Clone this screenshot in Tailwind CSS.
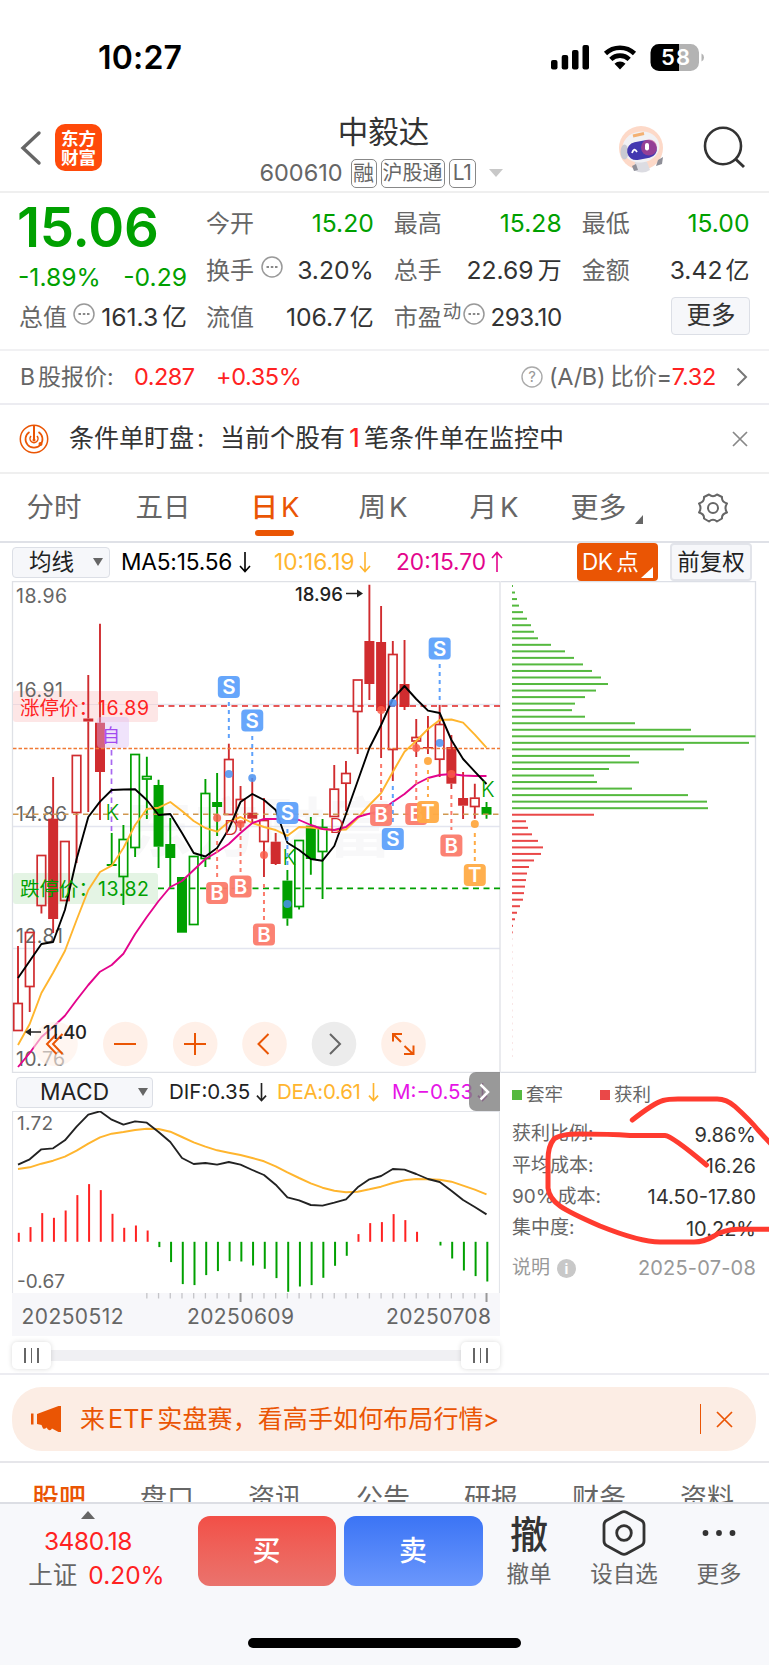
<!DOCTYPE html>
<html lang="zh-CN">
<head>
  <meta charset="UTF-8" />
  <title>中毅达 600610</title>
  <meta name="viewport" content="width=device-width, initial-scale=1.0" />
  <script src="https://cdn.jsdelivr.net/npm/@tailwindcss/browser@4"></script>
</head>
<body class="bg-white text-[#333] font-['Inter','Noto_Sans_CJK_SC',sans-serif] w-[769px] h-[1665px] overflow-hidden relative whitespace-nowrap flex flex-col">

  <!-- status bar -->
  <div class="h-[104px] shrink-0 flex items-start justify-between pl-[98px] pr-[64px] pt-[38px] text-black">
    <div class="text-[32px] leading-[40px] font-semibold tracking-[0.2px]">10:27</div>
    <svg class="mt-[2px]" width="156" height="36" viewBox="549 40 156 36">
      <rect x="551" y="60" width="6.5" height="9.5" rx="2" />
      <rect x="561.7" y="55" width="6.5" height="14.5" rx="2" />
      <rect x="572" y="50" width="6.5" height="19.5" rx="2" />
      <rect x="582.5" y="45" width="6.5" height="24.5" rx="2" />
      <g fill="none" stroke="#000" stroke-width="4.6">
        <path d="M605.5 53.500a21 21 0 0 1 29 0" />
        <path d="M610.800 59.300a13.300 13.300 0 0 1 18.400 0" />
      </g>
      <path d="M614.500 63.800a8 8 0 0 1 11 0L620 69.500z" />
      <path d="M659 44h20v27h-20a8.500 8.500 0 0 1-8.500-8.500v-10A8.500 8.500 0 0 1 659 44z" />
      <path d="M679 44h11.500a8.500 8.500 0 0 1 8.500 8.500v10a8.500 8.500 0 0 1-8.500 8.500H679z" fill="#b3b3b3" />
      <path d="M701.500 53.500q2.500 1 2.500 4t-2.500 4z" fill="#b3b3b3" />
      <text x="675.500" y="65.300" text-anchor="middle" font-size="22" font-weight="600" fill="#fff" textLength="29">58</text>
    </svg>
  </div>

  <!-- title bar -->
  <div class="h-[89px] shrink-0 border-b-2 border-[#efefef] flex justify-between pl-[20px] pr-[22px]">
    <div class="flex items-start w-[240px]">
      <svg class="mt-[26px]" width="22" height="36" viewBox="0 0 22 36"><path d="M19 3L3 18L19 33" fill="none" stroke="#666" stroke-width="3.400" stroke-linecap="round" /></svg>
      <div class="ml-[13px] mt-[20px] size-[47px] rounded-[10px] bg-[#ff4a0a] text-white text-[17.500px] leading-[19px] font-bold flex flex-col items-center justify-center"><span>东方</span><span>财富</span></div>
    </div>
    <div class="flex flex-col items-center">
      <div class="text-[30.500px] leading-[36px] mt-[10px] text-[#333]">中毅达</div>
      <div class="flex items-center h-[30px] mt-[8px] text-[#666] pr-[5px]">
        <span class="text-[23.500px] tracking-[0px] mr-[8px]">600610</span>
        <span class="border-[1.5px] border-[#888] rounded-[5px] h-[29px] w-[26px] text-[21px] leading-[26px] text-center mr-[4px] flex justify-center">融</span>
        <span class="border-[1.5px] border-[#888] rounded-[5px] h-[29px] w-[64px] text-[20px] leading-[26px] mr-[4px] flex justify-center">沪股通</span>
        <span class="border-[1.5px] border-[#888] rounded-[5px] h-[29px] w-[27px] text-[21px] leading-[26px] tracking-[-0.5px] flex justify-center">L1</span>
        <svg class="ml-[13px]" width="14" height="8"><path d="M0 0h14L7 8z" fill="#c8c8c8" /></svg>
      </div>
    </div>
    <div class="flex items-start justify-end w-[240px] pt-[20px]">
      <svg width="50" height="50" viewBox="617 124 50 50">
        <circle cx="642" cy="148" r="22" fill="#fdd9c8" />
        <path d="M636 162q6-3 12 0l3 8q-8 5-16 0z" fill="#dcdce2" />
        <path d="M633 166l4-2 2 6-4 1zM659 160l5-3-1 7-6 2z" fill="#8f8f98" />
        <ellipse cx="642" cy="147" rx="18.500" ry="15.500" fill="#f1f1f4" transform="rotate(-8 642 147)" />
        <ellipse cx="625.500" cy="152" rx="4" ry="7.500" fill="#c9cad2" />
        <rect x="628" y="141" width="30" height="18" rx="9" fill="#4338b0" transform="rotate(-10 643 150)" />
        <rect x="642" y="139.500" width="16" height="16" rx="8" fill="#c04488" opacity=".65" />
        <path d="M633 153q2-6 5-1" fill="none" stroke="#fff" stroke-width="1.800" />
        <rect x="646" y="143" width="4" height="7.500" rx="2" fill="#fff" />
        <path d="M634 136l11-2.500" stroke="#f3b072" stroke-width="3" />
      </svg>
      <svg class="ml-[36px] mr-[1px]" width="44" height="46" viewBox="704 124 44 46">
        <ellipse cx="725" cy="146" rx="18" ry="18.200" fill="none" stroke="#333" stroke-width="2.600" />
        <path d="M737.500 159l8.500 8" stroke="#333" stroke-width="3" />
      </svg>
    </div>
  </div>

  <!-- quote -->
  <div class="h-[158px] shrink-0 border-b-2 border-[#f1f1f3] flex gap-[19px] pl-[19px] pr-[19.500px] text-[24.700px] text-[#333]">
    <div class="w-[168px] shrink-0">
      <div class="h-[61px] pt-[4px] text-[54.500px] leading-[61px] font-semibold text-[#00a000] tracking-[-0.200px] -ml-[2px]">15.06</div>
      <div class="h-[40px] flex items-center justify-between text-[#00a000] mt-[4px] -ml-[1px]"><span>-1.89%</span><span>-0.29</span></div>
      <div class="h-[38px] flex items-center justify-between mt-[1px]">
        <span class="flex items-center text-[#666] text-[24px]">总值<svg class="ml-[6px] -mt-[8px]" width="22" height="22" viewBox="0 0 22 22"><circle cx="11" cy="11" r="10" fill="none" stroke="#999" stroke-width="1.500" /><path d="M5.500 11h2.500M9.800 11h2.500M14 11h2.500" stroke="#888" stroke-width="2.200" /></svg></span>
        <span>161.3<span class="ml-[4px]">亿</span></span>
      </div>
    </div>
    <div class="flex-1 grid grid-cols-3 gap-x-[20px] auto-rows-[47px] pt-[7px]">
      <div class="flex items-center justify-between"><span class="text-[#666] text-[24px]">今开</span><span class="text-[#00a000]">15.20</span></div>
      <div class="flex items-center justify-between"><span class="text-[#666] text-[24px]">最高</span><span class="text-[#00a000]">15.28</span></div>
      <div class="flex items-center justify-between"><span class="text-[#666] text-[24px]">最低</span><span class="text-[#00a000]">15.00</span></div>
      <div class="flex items-center justify-between"><span class="text-[#666] text-[24px] flex items-center">换手<svg class="ml-[7px] -mt-[8px]" width="22" height="22" viewBox="0 0 22 22"><circle cx="11" cy="11" r="10" fill="none" stroke="#999" stroke-width="1.500" /><path d="M5.500 11h2.500M9.800 11h2.500M14 11h2.500" stroke="#888" stroke-width="2.200" /></svg></span><span>3.20%</span></div>
      <div class="flex items-center justify-between"><span class="text-[#666] text-[24px]">总手</span><span>22.69<span class="ml-[4px] text-[24px]">万</span></span></div>
      <div class="flex items-center justify-between"><span class="text-[#666] text-[24px]">金额</span><span>3.42<span class="ml-[3px] text-[24px]">亿</span></span></div>
      <div class="flex items-center justify-between"><span class="text-[#666] text-[24px]">流值</span><span>106.7<span class="ml-[3px] text-[24px]">亿</span></span></div>
      <div class="flex items-center justify-between"><span class="text-[#666] text-[24px] flex items-center">市盈<span class="text-[18.500px] -mt-[12px] ml-[1px]">动</span><svg class="ml-[2px] -mt-[8px]" width="22" height="22" viewBox="0 0 22 22"><circle cx="11" cy="11" r="10" fill="none" stroke="#999" stroke-width="1.500" /><path d="M5.500 11h2.500M9.800 11h2.500M14 11h2.500" stroke="#888" stroke-width="2.200" /></svg></span><span class="tracking-[-0.500px] text-[24.200px] pt-[2px]">293.10</span></div>
      <div class="flex items-center justify-end"><span class="w-[79px] h-[38px] -mr-[1px] -mt-[4px] flex items-center justify-center rounded-[4px] border border-[#dcdfe6] bg-[#f6f7fa] text-[24.500px]">更多</span></div>
    </div>
  </div>

  <!-- B share price -->
  <div class="h-[54px] shrink-0 border-b-2 border-[#ececf1] flex items-center pl-[20px] pr-[21px] text-[23.500px] text-[#666]">
    <span class="w-[114px] text-[23px]"><span class="mr-[3px]">B</span>股报价:</span>
    <span class="w-[82px] tracking-[-0.500px] text-[#f22]">0.287</span>
    <span class="text-[#f22] tracking-[-0.400px]">+0.35%</span>
    <svg class="ml-auto mr-[6px]" width="22" height="22" viewBox="0 0 22 22"><circle cx="11" cy="11" r="10" fill="none" stroke="#aaa" stroke-width="1.400" /><text x="11" y="16.200" text-anchor="middle" font-size="15" fill="#999">?</text></svg>
    <span class="tracking-[-0.300px]">(A/B)<span class="ml-[5px]">比价=</span><span class="text-[#f22]">7.32</span></span>
    <svg class="ml-[20px]" width="12" height="20" viewBox="0 0 12 20"><path d="M1.500 1.500L10 10L1.500 18.500" fill="none" stroke="#777" stroke-width="2" /></svg>
  </div>

  <!-- conditional order notice -->
  <div class="h-[69px] shrink-0 border-b-2 border-[#efefef] flex items-center pl-[19px] pr-[21px] text-[25px] text-[#333]">
    <svg class="mr-[20px]" width="30" height="30" viewBox="0 0 30 30" fill="none" stroke="#ea5504" stroke-width="1.500">
      <circle cx="15" cy="15" r="13.700" /><path d="M10.500 8a8.500 8.500 0 1 0 9 0" stroke-width="1.700" /><path d="M12 12a4 4 0 1 0 6 0" /><path d="M15 1.500v14" stroke-width="2" /><circle cx="15" cy="16" r="1.500" fill="#ea5504" stroke="none" /><circle cx="21.500" cy="20" r="2" fill="#ea5504" stroke="none" />
    </svg>
    <span>条件单盯盘<span class="inline-block w-[26px] pl-[3px]">:</span>当前个股有<span class="text-[#f22] inline-block w-[19px] text-center font-medium">1</span>笔条件单在监控中</span>
    <svg class="ml-auto" width="16" height="16"><path d="M1 1L15 15M15 1L1 15" stroke="#888" stroke-width="1.700" /></svg>
  </div>

  <!-- period tabs -->
  <div class="h-[69px] shrink-0 border-b-2 border-[#dfe1e7] relative flex items-center text-[27.500px] text-[#666] pt-[1px]">
    <span class="ml-[26.500px] w-[109px]">分时</span>
    <span class="w-[115px]">五日</span>
    <span class="w-[108px] text-[#ea5504] font-medium relative">日<span class="ml-[3px] font-normal">K</span><span class="absolute left-[4px] top-[43px] w-[39px] h-[6px] rounded-full bg-[#ea5504]"></span></span>
    <span class="w-[111px]">周<span class="ml-[3px]">K</span></span>
    <span class="w-[101px]">月<span class="ml-[3px]">K</span></span>
    <span class="w-[64px] text-[28px]">更多</span>
    <svg class="mt-[22px]" width="8" height="9"><path d="M8 0v9H0z" fill="#666" /></svg>
    <svg class="ml-[53px]" width="34" height="32" viewBox="0 0 34 32" fill="none" stroke="#666" stroke-width="2">
      <path d="M13 2.500q4 3.500 8 0l5 2.500q-.5 5 5 6.500v0q-3 4.500 0 9q-5.500 1.500-5 6l-5 3q-4-3.500-8 0l-5-3q.5-4.500-5-6q3-4.500 0-9q5.500-1.500 5-6.500z" stroke-linejoin="round" /><circle cx="17" cy="16" r="5" />
    </svg>
  </div>

  <!-- moving average row -->
  <div class="h-[38px] shrink-0 flex items-center text-[22.700px]">
    <span class="ml-[12px] w-[98px] h-[31px] rounded-[4px] border-[1.500px] border-[#dcdfe6] bg-[#f6f7fa] flex items-center pl-[16px] text-[22.500px] text-[#222]">均线<svg class="ml-[19px]" width="10" height="8"><path d="M0 0h10L5 8z" fill="#666" /></svg></span>
    <span class="ml-[11px] w-[153px] text-black flex items-center tracking-[-0.200px]">MA5:15.56<svg class="ml-[7px]" width="12" height="22" viewBox="0 0 12 22"><path d="M6 1v19M1 15l5 5.500l5-5.500" fill="none" stroke="#000" stroke-width="1.600" /></svg></span>
    <span class="w-[122px] text-[#ffb52e] flex items-center">10:16.19<svg class="ml-[5px]" width="12" height="22" viewBox="0 0 12 22"><path d="M6 1v19M1 15l5 5.500l5-5.500" fill="none" stroke="#ffb52e" stroke-width="1.600" /></svg></span>
    <span class="text-[#e3048c] flex items-center">20:15.70<svg class="ml-[5px]" width="12" height="22" viewBox="0 0 12 22"><path d="M6 21V2M1 7l5-5.500l5 5.500" fill="none" stroke="#e3048c" stroke-width="1.600" /></svg></span>
    <span class="ml-auto w-[81px] h-[38px] rounded-[4px] bg-[#ea5504] text-white flex items-center pl-[5px] relative text-[22.500px] tracking-[-0.500px]">DK<span class="ml-[4px]">点</span><svg class="absolute right-[5px] bottom-[3px]" width="12" height="11"><path d="M12 0v11H0z" fill="#fff" /></svg></span>
    <span class="ml-[12px] mr-[17px] w-[82px] h-[38px] rounded-[4px] border-2 border-[#e2e4ea] bg-[#f6f7fa] flex items-center justify-center text-[22.500px] text-[#222]">前复权</span>
  </div>

  <!-- candles + cost distribution -->
  <div class="h-[492px] shrink-0 flex">
    <svg id="kline" width="501" height="492" viewBox="0 581 501 492"></svg>
    <svg id="chips" width="268" height="492" viewBox="501 581 268 492"></svg>
  </div>

  <div class="h-[302px] shrink-0 border-b-2 border-[#ececf1] flex">
    <!-- MACD -->
    <div class="w-[500px] pl-[12px] shrink-0">
      <div class="h-[38px] flex items-center text-[20.500px] relative">
        <span class="ml-[4px] w-[137px] h-[31px] rounded-[4px] border-[1.500px] border-[#dcdfe6] bg-[#f6f7fa] flex items-center pl-[23px] text-[22.700px] tracking-[0.300px] text-[#222]">MACD<svg class="ml-auto mr-[4px]" width="10" height="8"><path d="M0 0h10L5 8z" fill="#666" /></svg></span>
        <span class="ml-[16px] w-[108px] text-[#222] flex items-center">DIF:0.35<svg class="ml-[6px]" width="11" height="20" viewBox="0 0 12 22"><path d="M6 1v19M1 15l5 5.500l5-5.500" fill="none" stroke="#222" stroke-width="1.800" /></svg></span>
        <span class="w-[115px] text-[#ffb52e] flex items-center tracking-[-0.300px]">DEA:0.61<svg class="ml-[7px]" width="11" height="20" viewBox="0 0 12 22"><path d="M6 1v19M1 15l5 5.500l5-5.500" fill="none" stroke="#ffb52e" stroke-width="1.800" /></svg></span>
        <span class="text-[#e614e6] flex items-center">M:−0.53<svg class="ml-[4px]" width="11" height="20" viewBox="0 0 12 22"><path d="M6 1v19M1 15l5 5.500l5-5.500" fill="none" stroke="#a010a0" stroke-width="1.800" /></svg></span>
        <span class="absolute right-0 -top-[1px] w-[31px] h-[39px] rounded-l-[7px] bg-[#808080]/80 flex items-center justify-center"><svg width="11" height="18" viewBox="0 0 11 18"><path d="M1.500 1.500L9 9L1.500 16.500" fill="none" stroke="#fff" stroke-width="2.500" /></svg></span>
      </div>
      <svg id="macd" width="488" height="226" viewBox="12 1111 488 226"></svg>
      <div class="relative h-[38px] flex items-center justify-between">
        <div class="absolute left-[30px] right-[30px] top-[13px] h-[11px] bg-[#f0f0f3]"></div>
        <div class="relative w-[39px] h-[27px] -mt-[1px] rounded-[5px] bg-white shadow-[0_0_5px_rgba(0,0,0,0.15)] flex items-center justify-center gap-[5px]"><i class="w-[1.500px] h-[15px] bg-[#666]"></i><i class="w-[1.500px] h-[15px] bg-[#666]"></i><i class="w-[1.500px] h-[15px] bg-[#666]"></i></div>
        <div class="relative w-[39px] h-[27px] -mt-[1px] rounded-[5px] bg-white shadow-[0_0_5px_rgba(0,0,0,0.15)] flex items-center justify-center gap-[5px]"><i class="w-[1.500px] h-[15px] bg-[#666]"></i><i class="w-[1.500px] h-[15px] bg-[#666]"></i><i class="w-[1.500px] h-[15px] bg-[#666]"></i></div>
      </div>
    </div>

    <!-- cost summary -->
    <div class="flex-1 pl-[12px] pr-[13px] text-[19px] text-[#666]">
      <div class="h-[44px] flex items-center text-[18.500px]">
        <i class="size-[10px] bg-[#55b93f] mr-[4px]"></i><span class="w-[74px]">套牢</span>
        <i class="size-[10px] bg-[#ea4848] mr-[4px]"></i><span>获利</span>
      </div>
      <div class="h-[31.300px] mt-[2px] flex items-center justify-between"><span>获利比例:</span><span class="text-[#333] text-[20px]">9.86%</span></div>
      <div class="h-[31.300px] flex items-center justify-between"><span>平均成本:</span><span class="text-[#333] text-[20px]">16.26</span></div>
      <div class="h-[31.300px] flex items-center justify-between"><span>90%<span class="ml-[3px]">成本:</span></span><span class="text-[#333] text-[20.300px]">14.50-17.80</span></div>
      <div class="h-[31.300px] flex items-center justify-between"><span>集中度:</span><span class="text-[#333] text-[20px]">10.22%</span></div>
      <div class="h-[48px] flex items-center text-[#999]"><span>说明</span><span class="ml-[7px] size-[19px] rounded-full bg-[#c8c8c8] text-white text-[14px] font-bold flex items-center justify-center">i</span><span class="ml-auto text-[20px] tracking-[0.200px]">2025-07-08</span></div>
    </div>
  </div>

  <!-- banner -->
  <div class="h-[88px] shrink-0 border-b-2 border-[#e6e6ea] pt-[12px] pl-[12px] pr-[13px]">
    <div class="h-[64px] rounded-[30px] bg-[#fcede4] flex items-center pl-[19px] pr-[23px] text-[#ea5504] text-[25px]">
      <svg width="30" height="26" viewBox="0 0 30 26" fill="#ea5504"><path d="M0 7.500h2.500v11H0zM6 8L27.500 0H30v26h-2.500L21 22.500q-1.500 3-4 1l-1.500-2q-1.500 2-3.500 1L10.500 19L6 18z" /></svg>
      <span class="ml-[19px] tracking-[0.100px] pt-[1px]">来<span class="ml-[3px] mr-[3px]">ETF</span>实盘赛，看高手如何布局行情<span class="-ml-[1px]">&gt;</span></span>
      <i class="ml-auto w-[1.500px] h-[30px] bg-[#ea5504]"></i>
      <svg class="ml-[15px]" width="17" height="17"><path d="M1 1L16 16M16 1L1 16" stroke="#ea5504" stroke-width="1.700" /></svg>
    </div>
  </div>

  <!-- info tabs, cut off by the trade bar -->
  <div class="h-[39px] shrink-0 overflow-hidden grid grid-cols-[repeat(7,108px)] pl-[5px] pt-[16px] text-[27px] leading-[40px] text-center text-[#666]">
    <span class="text-[#ea5504] font-medium">股吧</span><span>盘口</span><span>资讯</span><span>公告</span><span>研报</span><span>财务</span><span>资料</span>
  </div>

  <!-- trade bar -->
  <div class="h-[163px] shrink-0 bg-[#f7f8fb] border-t-2 border-[#dcdee4] relative flex items-start">
    <div class="w-[176px] flex flex-col items-center text-[24.500px] text-[#f22]">
      <svg class="mt-[7px]" width="14" height="8"><path d="M0 8h14L7 0z" fill="#666" /></svg>
      <span class="leading-[34px] mt-[5px] tracking-[-0.400px]">3480.18</span>
      <span class="leading-[34px] flex gap-[11px] ml-[17px]"><span class="text-[#666] text-[24.500px]">上证</span>0.20%</span>
    </div>
    <div class="ml-[21.500px] mt-[12px] w-[138px] h-[70px] rounded-[12px] bg-linear-to-b from-[#f24f47] to-[#ea736d] text-white text-[28px] font-medium flex items-center justify-center">买</div>
    <div class="ml-[8px] mt-[12px] w-[139px] h-[70px] rounded-[12px] bg-linear-to-b from-[#3b74f5] to-[#6b97fc] text-white text-[28px] font-medium flex items-center justify-center">卖</div>
    <div class="ml-[6.500px] w-[80px] flex flex-col items-center text-[22.500px] text-[#666]"><span class="h-[52px] mt-[4px] text-[38px] leading-[52px] font-medium text-[#333]">撤</span><span class="leading-[28px]">撤单</span></div>
    <div class="ml-[15px] w-[80px] flex flex-col items-center text-[22.500px] text-[#666]"><svg class="mt-[6px] mb-[4px]" width="46" height="46" viewBox="0 0 46 46" fill="none" stroke="#333" stroke-width="2.800"><path d="M20.500 2.300q2.500-1.300 5 0l15 8.200q2.500 1.500 2.500 4.500v16q0 3-2.500 4.500l-15 8.200q-2.500 1.300-5 0l-15-8.200Q3 34 3 31V15q0-3 2.500-4.500z" /><circle cx="23" cy="23" r="7.300" /></svg><span class="leading-[28px]">设自选</span></div>
    <div class="ml-[15px] w-[80px] flex flex-col items-center text-[22.500px] text-[#666]"><svg class="mt-[26px] mb-[24px]" width="34" height="6"><circle cx="3.500" cy="3" r="2.900" fill="#333" /><circle cx="17" cy="3" r="2.900" fill="#333" /><circle cx="30.500" cy="3" r="2.900" fill="#333" /></svg><span class="leading-[28px]">更多</span></div>
    <div class="absolute left-[248px] top-[134px] w-[273px] h-[10px] rounded-full bg-black"></div>
  </div>

  <!-- hand-drawn marks -->
  <svg class="absolute left-[500px] top-[1080px]" width="269" height="180" viewBox="500 1080 269 180" fill="none" stroke="#ff3b2f" stroke-width="5" stroke-linecap="round" stroke-linejoin="round">
    <path d="M632.300 1120Q654 1103 663 1100.500Q668 1099 678 1099H716Q726 1098.500 735 1106.500Q750 1120 758 1130L771 1144" />
    <path d="M706.500 1165Q672 1136 665 1135.500H630Q610 1134 580 1134Q560 1134 554 1139Q548 1146 548 1160V1188Q549 1198 560 1206Q570 1213 600 1226Q640 1242 660 1242H694Q704 1242 714 1236Q724 1229.500 738 1229.300H771" />
  </svg>

  <script>
    const STEP = 11.713;
    const X = i => 18 + i * STEP;
    const RED = '#d02c2f';
    const GREEN = '#00a000';

    // [high, body top, body bottom, low, style]: r/g hollow, R/G solid
    const candles = [
      [946, 1003, 1031, 1031, 'r'], [932, 932, 987, 1012, 'r'], [855, 855, 906, 913.5, 'r'], [777, 818.700, 919, 933, 'R'],
      [841, 841, 901, 901, 'r'], [755, 755, 813, 863, 'r'], [675, 718.500, 721.500, 812, 'R'], [623.700, 722.700, 772, 820, 'R'],
      [833, 864, 866, 866, 'G'], [825, 839, 877, 905, 'g'], [754, 754, 848, 857, 'g'], [756.700, 776, 779.500, 819, 'g'],
      [779.700, 785, 846.700, 868, 'G'], [818, 844, 858, 887, 'G'], [877, 877, 932.700, 932.700, 'G'], [856, 856, 925, 925, 'g'],
      [779, 793, 859, 867, 'g'], [773, 802, 807, 836, 'G'], [743.700, 759, 815, 815, 'r'], [786, 799, 823, 831, 'r'],
      [778, 812.700, 818.700, 823, 'R'], [798, 820, 842, 877, 'r'], [833, 841.700, 864, 865, 'R'], [870, 880.600, 918.500, 925.700, 'G'],
      [840, 840, 907, 909.500, 'g'], [817, 825.700, 859, 874.700, 'G'], [819, 827, 852, 899, 'g'], [765, 788.700, 817, 817, 'r'],
      [761, 773, 783.700, 811, 'r'], [679.500, 679.500, 712, 754, 'r'], [584.700, 641, 684, 700, 'R'], [606, 642, 711, 758, 'R'],
      [641, 654, 750, 781, 'r'], [640, 684, 707, 710, 'R'], [719, 737, 741.500, 757, 'r'], [716, 747, 748.500, 754, 'R'],
      [705, 724, 759.700, 777, 'r'], [735, 747, 783.700, 789, 'R'], [772, 798, 805.700, 819, 'R'], [783.700, 797.700, 807, 818.700, 'r'],
      [802, 807, 814.700, 818.700, 'G']
    ];
    const ma5 = [978, 961, 944, 942, 910, 859, 817, 801.700, 790, 789.500, 789.300, 800, 815, 814, 833, 853, 856.500, 848, 829, 802, 794, 800, 810, 842.700, 850, 859, 860.700, 846, 814, 781, 748, 725, 699, 686, 699, 710.600, 713, 740, 759, 771.600, 784];
    const ma10 = [1045, 1024, 993, 972.700, 951, 920, 890, 872, 865.700, 848, 825, 809, 807.700, 802, 811, 821, 828, 831.700, 821.700, 817, 823, 827, 830, 835.700, 827, 827.500, 829, 830, 829.500, 818, 805, 793, 772, 751.700, 741, 729, 720, 719.500, 722.700, 734.700, 747.600];
    const ma20 = [1067, 1053, 1037, 1027, 1015.700, 1000, 985, 971.700, 965, 953.700, 934, 917, 901, 887, 881, 870, 859, 852, 844, 833, 823, 819, 819, 819, 820, 825, 829, 830, 827, 817, 813.700, 811, 802, 794, 784, 778, 775, 774, 775.500, 776, 776];

    const pts = a => a.map((y, i) => `${X(i).toFixed(1)},${y}`).join(' ');
    const curve = (a, color, w = 1.9) => `<polyline points="${pts(a)}" fill="none" stroke="${color}" stroke-width="${w}" stroke-linejoin="round"/>`;
    const hline = (y, color, x1 = 12, x2 = 500, dash = '', w = 1) => `<path d="M${x1} ${y}H${x2}" stroke="${color}" stroke-width="${w}" stroke-dasharray="${dash}"/>`;
    const text = (x, y, s, len, color = '#666', size = 19.5, extra = '') => `<text x="${x}" y="${y}" textLength="${len}" font-size="${size}" fill="${color}" ${extra}>${s}</text>`;

    function drawCandle([hi, top, bot, lo, kind], i) {
      const color = kind.toLowerCase() === 'r' ? RED : GREEN;
      const solid = kind === 'R' || kind === 'G';
      const x = X(i);
      const body = solid
        ? `<rect x="${x - 5}" y="${top}" width="10" height="${bot - top}" fill="${color}"/>`
        : `<rect x="${x - 4.25}" y="${top + 0.5}" width="8.5" height="${Math.max(bot - top - 1, 2)}" fill="none" stroke="${color}" stroke-width="1.7"/>`;
      return `<path d="M${x} ${hi}V${top}M${x} ${bot}V${lo}" stroke="${color}" stroke-width="1.9"/>${body}`;
    }

    // [index, badge y, letter, dash from, dash to, dot y]
    const marks = [
      [18, 687, 'S', 702, 738, 774], [20, 720.5, 'S', 736, 775, 778], [23, 813, 'S', 829, 865, 904], [32, 839, 'S', 786, 825, 703], [36, 648.5, 'S', 664, 700, 743],
      [17, 893, 'B', 841, 878, 818], [19, 886.5, 'B', 836, 872, 824], [21, 934.5, 'B', 884, 920, 855], [31, 815, 'B', 764, 800, 710], [34, 814, 'B', 764, 800, 748], [37, 845.5, 'B', 795, 830, 774],
      [35, 812, 'T', 770, 797, 761], [39, 875, 'T', 833, 862, 824]
    ];
    const markColor = { S: '#5ea1fb', B: '#fb7b6c', T: '#ffab45' };
    const dotColor = { S: '#4a90f0', B: '#fa5a48', T: '#ff9f2a' };

    function drawMark([i, y, s, y1, y2, dot]) {
      const x = X(i);
      return `<path d="M${x} ${y1}V${y2}" stroke="${markColor[s]}" stroke-width="2" stroke-dasharray="4 4"/>
        <circle cx="${x}" cy="${dot}" r="4" fill="${dotColor[s]}" opacity=".85"/>
        <rect x="${x - 11}" y="${y - 11}" width="22" height="22" rx="4" fill="${markColor[s]}" opacity=".95"/>
        <text x="${x}" y="${y + 7.3}" text-anchor="middle" font-size="20.500" font-weight="600" fill="#fff">${s}</text>`;
    }

    const arrowLines = 'fill="none" stroke="#ea5504" stroke-width="2"';
    const controls = [55.5, 125.3, 195.2, 264.5, 334, 403.5]
      .map((x, i) => `<circle cx="${x}" cy="1044" r="22.300" fill="${i === 4 ? '#ececec' : '#fff0e8'}" opacity="${i === 0 ? 0.6 : 1}"/>`).join('') +
      `<path d="M56.500 1034L47 1044L56.500 1054M62.500 1034L53 1044L62.500 1054" ${arrowLines}/>
       <path d="M114 1044H136M184 1044H206M195 1033V1055" ${arrowLines}/>
       <path d="M268.500 1034L258.500 1044L268.500 1054" ${arrowLines}/>
       <path d="M330 1034L340 1044L330 1054" fill="none" stroke="#666" stroke-width="2"/>
       <path d="M393 1041.500V1034H402M394 1035L401 1042M404.500 1046L413 1054M404 1054H413.500V1045.500" ${arrowLines}/>`;

    document.getElementById('kline').innerHTML = `
      <text x="128" y="851" font-size="64" font-weight="700" textLength="264" fill="#f8f8f9">东方财富</text>
      ${[704.5, 826.5, 948.5].map(y => hline(y, '#e3e5ef', 12, 500, '', 1.3)).join('')}
      <path d="M12.500 1072.500V581.500H500V1072.500Z" fill="none" stroke="#dfe1e6" stroke-width="1.3"/>
      <rect x="13" y="691" width="145" height="31" rx="3" fill="#fde6e6"/>
      <rect x="13" y="873" width="145" height="31" rx="3" fill="#e4f4e4"/>
      ${hline(704.5, '#ecd8de', 13, 158)}
      ${text(16, 603, '18.96', 51)}${text(16, 697, '16.91', 47)}${text(16, 821, '14.86', 51)}${text(16, 943, '12.81', 47)}${text(16, 1066, '10.76', 49)}
      ${candles.map(drawCandle).join('')}
      ${hline(706, '#e02020', 158, 500, '6 4.5', 1.7)}
      ${hline(748.5, '#f07a35', 13, 500, '3.5 2', 1.6)}
      ${hline(814.3, '#cf9850', 13, 500, '5.5 4.5', 1.6)}
      ${hline(888.3, '#00a000', 158, 500, '6 4.5', 1.7)}
      <rect x="97" y="717" width="32" height="31" rx="4" fill="#d9b8f5" opacity=".4"/>
      ${text(102, 741.5, '自', 18, '#a24bf0', 18)}
      <path d="M111.500 750V831" stroke="#a868f0" stroke-width="1.7" stroke-dasharray="5.500 4"/>
      ${curve(ma10, '#ffb52e')}${curve(ma20, '#e3048c')}${curve(ma5, '#000')}
      ${text(20, 714.5, '涨停价：', 78, '#f22', 19.5)}${text(98, 714.5, '16.89', 51, '#f22')}
      ${text(20, 895.5, '跌停价：', 78, '#00a000', 19.5)}${text(98, 895.5, '13.82', 51, '#00a000')}
      ${text(105.5, 819.5, 'K', 13, GREEN, 21, 'font-weight="300"')}${text(282.5, 865, 'K', 13, GREEN, 21, 'font-weight="300"')}${text(481, 797, 'K', 13, GREEN, 21, 'font-weight="300"')}
      ${text(224, 835, 'D', 13, RED, 20, 'font-weight="300"')}${text(329.5, 833, 'D', 13, RED, 20, 'font-weight="300"')}
      ${marks.map(drawMark).join('')}
      ${text(295, 600.5, '18.96', 48, '#222', 18.5, 'font-weight="500"')}
      <path d="M346 593.500H358" stroke="#222" stroke-width="1.5"/><path d="M357 589.500l6 4l-6 4z" fill="#222"/>
      ${controls}
      ${text(43, 1038.5, '11.40', 44, '#222', 18.5, 'font-weight="500"')}
      <path d="M30 1032H41" stroke="#222" stroke-width="1.5"/><path d="M31 1028l-6 4l6 4z" fill="#222"/>`;

    // bar lengths of the cost distribution, top to bottom
    const trapped = [1, 3, 5, 7, 11, 15, 19, 22, 26, 39, 53, 62, 71, 80, 89, 96, 84, 73, 63, 60, 73, 123, 179, 243.5, 237, 172, 118, 127, 97, 82, 85, 120, 176, 195, 196];
    const profit = [82, 14, 16, 20, 26, 31, 29, 22, 17, 15, 14, 13, 12, 11, 8, 5, 3, 1, 0.7];
    document.getElementById('chips').innerHTML = `
      <path d="M500 581.500H755.500V1072.500H500" fill="none" stroke="#dcdfe6" stroke-width="1.3"/>
      ${[...trapped, ...profit].map((w, i) =>
        `<rect x="512" y="${(585 + i * 6.535).toFixed(2)}" width="${w}" height="2" fill="${i < trapped.length ? '#55b93f' : '#ea4848'}"/>`).join('')}
      <path d="M512.500 938V1060" stroke="#f9e6e6" stroke-dasharray="2 4.500"/>`;

    const bars = [9, 14.7, 28.7, 24, 31.3, 46.7, 57.7, 51.7, 28, 14, 16.3, 11.3, -5.3, -20.3, -42.3, -43.3, -33.3, -29.3, -19.3, -19.7, -23.7, -27, -36.3, -50, -44.7, -43.3, -36, -24, -14, 7.7, 18.7, 19.7, 27.7, 21.7, 10, 0, -3.7, -16.7, -28.7, -34.3, -39.7];
    const dif = [284, 268, 238, 235, 211, 170, 134, 124, 149, 164, 154, 158, 186, 216, 264, 282, 279, 284, 276, 284, 300, 315, 344, 382, 391, 405, 407, 398, 388, 352, 328, 318, 297, 299, 312, 327, 336, 362, 390, 411, 433].map(v => 1070 + v / 3);
    const dea = [297, 292, 281, 272, 260, 242, 221, 202, 191, 186, 180, 176, 177, 185, 201, 217, 230, 241, 248, 255, 264, 274, 289, 307, 324, 340, 353, 362, 367, 365, 358, 350, 339, 331, 327, 328, 329, 335, 347, 359, 373].map(v => 1070 + v / 3);
    document.getElementById('macd').innerHTML = `
      <rect x="12" y="1293" width="488" height="43" fill="#f7f7fa"/>
      <path d="M12.500 1293V1111.500H499.500V1293" fill="none" stroke="#e3e5ea" stroke-width="1.2"/>
      ${bars.map((v, i) => `<path d="M${X(i) + 0.8} 1241.800V${1241.8 - v}" stroke="${v > 0 ? '#f22' : GREEN}" stroke-width="2"/>`).join('')}
      ${curve(dea, '#ffb52e', 2)}${curve(dif, '#222')}
      ${text(17, 1130, '1.72', 36, '#666', 19)}${text(17, 1288, '-0.67', 48, '#666', 19)}
      ${dif.map((_, i) => i < 11 ? '' : `<path d="M${X(i)} 1293V${i === 19 || i === 40 ? 1302 : 1298.5}" stroke="${i === 19 || i === 40 ? '#999' : '#c4c4c8'}" stroke-width="${i === 19 || i === 40 ? 2 : 1.3}"/>`).join('')}
      ${text(21.5, 1323.5, '20250512', 102, '#666', 21)}${text(187, 1323.5, '20250609', 107, '#666', 21)}${text(386, 1323.5, '20250708', 105, '#666', 21)}`;
  </script>
</body>
</html>
